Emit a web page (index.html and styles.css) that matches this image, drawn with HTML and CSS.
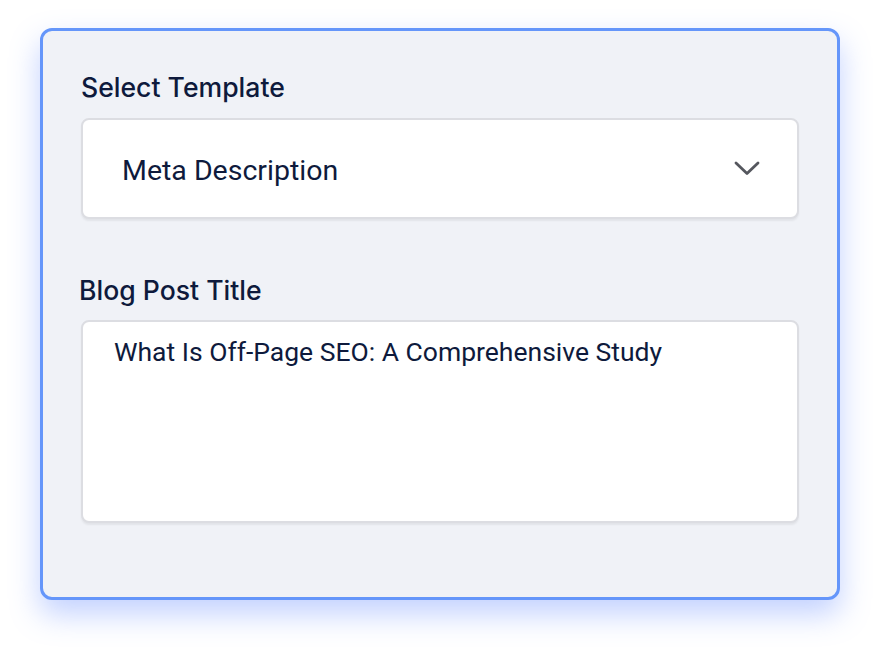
FILE: index.html
```html
<!DOCTYPE html>
<html>
<head>
<meta charset="utf-8">
<link rel="stylesheet" href="styles.css">
</head>
<body>
<div class="card">
  <div class="field">
    <div class="label">Select Template</div>
    <div class="select">
      <span class="select-text">Meta Description</span>
      <svg class="chev" width="28" height="18" viewBox="0 0 28 18"><path d="M3 4 L14 14.5 L25 4" fill="none" stroke="#55575e" stroke-width="2.8" stroke-linecap="round" stroke-linejoin="round"/></svg>
    </div>
  </div>
  <div class="field field2">
    <div class="label label2">Blog Post Title</div>
    <div class="textarea">What Is Off-Page SEO: A Comprehensive Study</div>
  </div>
</div>
</body>
</html>
```
FILE: styles.css
```css
html, body { margin: 0; padding: 0; background: #ffffff; }
body { width: 880px; height: 652px; overflow: hidden; font-family: Roboto, "Noto Sans", sans-serif; color: #0e1a3c; }
.card {
  margin: 28px 0 0 40px;
  width: 800px;
  height: 572px;
  box-sizing: border-box;
  border: 3px solid #6596fa;
  border-radius: 12px;
  background: #f0f2f7;
  box-shadow: 0 14px 30px rgba(95, 135, 255, 0.38);
  padding: 41px 38px 0 38px;
}
.label { font-family: Inter, Roboto, sans-serif; font-size: 26.6px; font-weight: 500; line-height: 31px; margin-bottom: 15px; }
.label2 { margin-left: -2px; margin-bottom: 14px; }
.select {
  height: 101px;
  box-sizing: border-box;
  background: #fff;
  border: 2px solid #dcdde2;
  border-radius: 8px;
  box-shadow: 0 2px 2px rgba(0,0,0,0.06);
  display: flex;
  align-items: center;
  justify-content: space-between;
  padding: 0 36px 0 39px;
}
.select-text { font-size: 28.5px; line-height: 34px; margin-top: 4px; }
.chev { display: block; margin-top: -2px; }
.field2 { margin-top: 56px; }
.textarea {
  height: 203px;
  box-sizing: border-box;
  background: #fff;
  border: 2px solid #dcdde2;
  border-radius: 8px;
  box-shadow: 0 2px 2px rgba(0,0,0,0.06);
  padding: 14px 31px;
  font-size: 26.5px;
  line-height: 31px;
}
```
